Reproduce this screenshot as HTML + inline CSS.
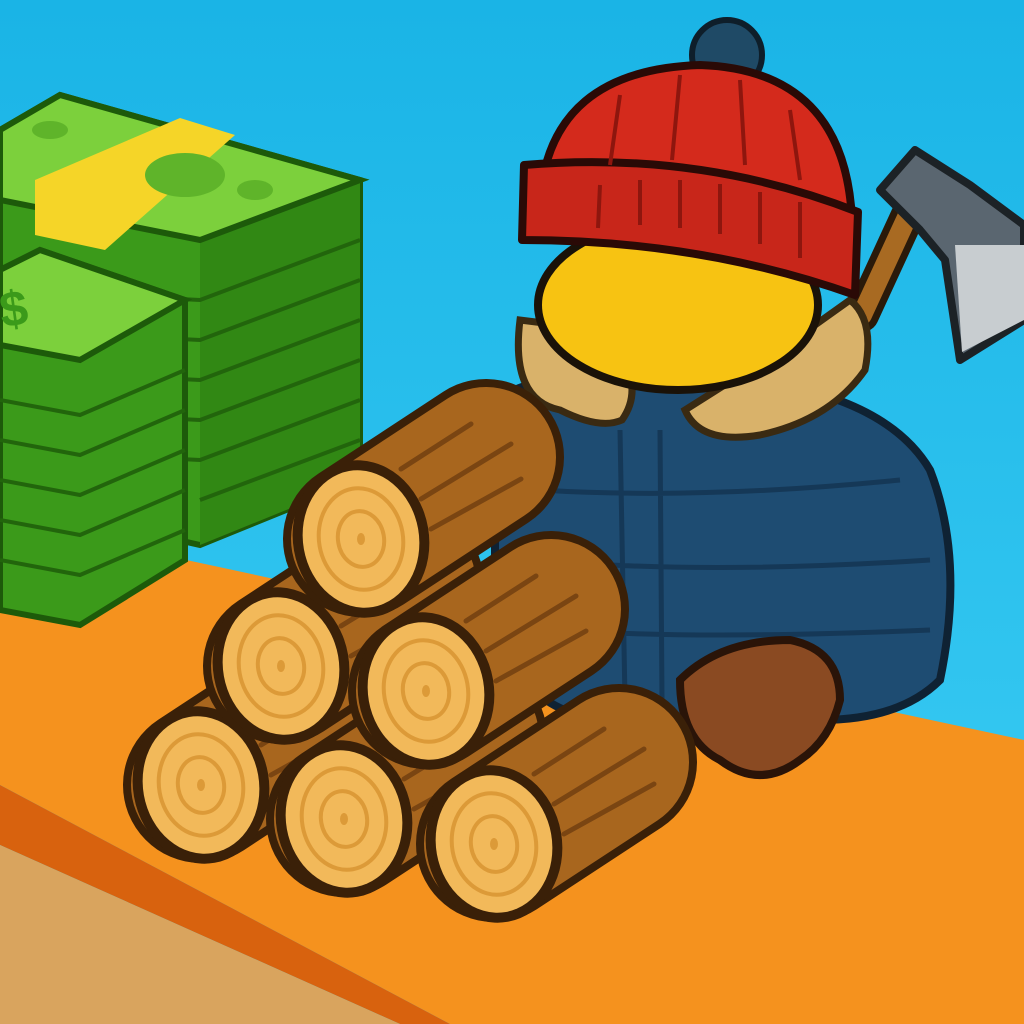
<!DOCTYPE html>
<html><head><style>html,body{margin:0;padding:0;width:1024px;height:1024px;overflow:hidden}</style></head>
<body>
<svg width="1024" height="1024" viewBox="0 0 1024 1024" xmlns="http://www.w3.org/2000/svg">
<defs>
<linearGradient id="sky" x1="0" y1="0" x2="0" y2="1"><stop offset="0" stop-color="#1ab4e6"/><stop offset="1" stop-color="#3ccdf4"/></linearGradient>
<g id="log">
  <line x1="0" y1="0" x2="125" y2="-82" stroke="#3a2008" stroke-width="156" stroke-linecap="round"/>
  <line x1="0" y1="0" x2="125" y2="-82" stroke="#a8661e" stroke-width="140" stroke-linecap="round"/>
  <path d="M60,-40 L150,-95 M70,-10 L160,-60 M40,-70 L110,-115" stroke="#7a4512" stroke-width="5" stroke-linecap="round"/>
  <ellipse cx="0" cy="0" rx="68" ry="79" fill="#3a2008" transform="rotate(-10)"/>
  <ellipse cx="0" cy="0" rx="58" ry="69" fill="#f2b95a" transform="rotate(-10)"/>
  <ellipse cx="0" cy="0" rx="42" ry="51" fill="none" stroke="#dc9a38" stroke-width="4" transform="rotate(-10)"/>
  <ellipse cx="0" cy="0" rx="23" ry="28" fill="none" stroke="#dc9a38" stroke-width="4" transform="rotate(-10)"/>
  <ellipse cx="0" cy="0" rx="4" ry="6" fill="#dc9a38"/>
</g>
</defs>
<rect width="1024" height="1024" fill="url(#sky)"/>
<!-- table -->
<polygon points="0,520 1024,740 1024,1024 450,1024 0,785" fill="#f5921e"/>
<polygon points="0,785 450,1024 400,1024 0,845" fill="#d8620e"/>
<polygon points="0,845 400,1024 0,1024" fill="#d9a45e"/>
<!-- back money stack -->
<polygon points="0,130 60,95 360,180 360,480 200,545 0,500" fill="#3b9a1a" stroke="#1d5a0a" stroke-width="6"/>
<polygon points="200,240 360,180 360,480 200,545" fill="#318814"/>
<g stroke="#22650c" stroke-width="4" fill="none">
<path d="M0,290 L200,300 L360,240 M0,330 L200,340 L360,280 M0,370 L200,380 L360,320 M0,410 L200,420 L360,360 M0,450 L200,460 L360,400 M200,500 L360,440"/>
</g>
<polygon points="0,130 60,95 360,180 200,240 0,200" fill="#7cd03c" stroke="#1d5a0a" stroke-width="6"/>
<polygon points="35,180 180,118 235,135 105,250 35,235" fill="#f5d528"/>
<ellipse cx="185" cy="175" rx="40" ry="22" fill="#5fb42a"/>
<ellipse cx="255" cy="190" rx="18" ry="10" fill="#5fb42a"/>
<ellipse cx="50" cy="130" rx="18" ry="9" fill="#5fb42a"/>
<!-- front money stack -->
<polygon points="0,270 40,250 185,300 185,560 80,625 0,610" fill="#3b9a1a" stroke="#1d5a0a" stroke-width="6"/>
<g stroke="#22650c" stroke-width="4" fill="none">
<path d="M0,400 L80,415 L185,370 M0,440 L80,455 L185,410 M0,480 L80,495 L185,450 M0,520 L80,535 L185,490 M0,560 L80,575 L185,530"/>
</g>
<polygon points="0,270 40,250 185,300 80,360 0,345" fill="#7cd03c" stroke="#1d5a0a" stroke-width="6"/>
<text x="0" y="325" font-family="Liberation Sans, sans-serif" font-weight="bold" font-size="50" fill="#3b9a1a" transform="rotate(-8 20 310)">$</text>
<!-- axe -->
<line x1="862" y1="315" x2="915" y2="200" stroke="#2a1a0a" stroke-width="34" stroke-linecap="round"/>
<line x1="862" y1="315" x2="915" y2="200" stroke="#a86a22" stroke-width="20" stroke-linecap="round"/>
<polygon points="880,190 915,150 970,185 1024,225 1024,320 960,360 945,260 920,230" fill="#5a6670" stroke="#1c2226" stroke-width="8" stroke-linejoin="round"/>
<polygon points="955,245 1024,245 1024,320 962,352" fill="#c8cdd0"/>
<!-- body -->
<path d="M495,400 Q560,360 700,375 Q880,385 930,470 Q965,560 940,680 Q900,720 820,720 L620,720 Q510,720 495,600 Z" fill="#1e4c72" stroke="#0f2233" stroke-width="8"/>
<g stroke="#153857" stroke-width="5" fill="none">
<path d="M620,430 L625,700 M660,430 L662,700 M540,490 Q700,500 900,480 M540,560 Q700,575 930,560 M560,630 Q700,640 930,630"/>
</g>
<!-- fur collar -->
<path d="M520,320 Q510,400 560,410 Q600,430 622,420 Q650,380 600,330 Z" fill="#d9b26a" stroke="#3a2a12" stroke-width="7"/>
<path d="M685,410 Q700,445 760,435 Q830,420 865,370 Q875,320 850,300 L780,350 Z" fill="#d9b26a" stroke="#3a2a12" stroke-width="7"/>
<!-- face -->
<ellipse cx="678" cy="305" rx="140" ry="85" fill="#f7c312" stroke="#1a1208" stroke-width="8"/>
<!-- hat -->
<circle cx="727" cy="55" r="35" fill="#1f4a66" stroke="#0e1e2a" stroke-width="6"/>
<path d="M540,200 Q550,70 700,65 Q845,70 852,220 Z" fill="#d42a1c" stroke="#2a0a06" stroke-width="8"/>
<path d="M524,165 Q700,150 858,212 L855,295 Q700,240 522,240 Z" fill="#c8261a" stroke="#2a0a06" stroke-width="8" stroke-linejoin="round"/>
<g stroke="#8e160e" stroke-width="4">
<path d="M600,185 L598,228 M640,180 L640,225 M680,180 L680,228 M720,184 L720,234 M760,192 L760,244 M800,202 L800,258 M620,95 L610,165 M680,75 L672,160 M740,80 L745,165 M790,110 L800,180"/>
</g>
<!-- glove -->
<path d="M680,680 Q720,640 790,640 Q840,650 840,700 Q830,740 800,760 Q760,790 720,760 Q680,740 680,680 Z" fill="#8a4a22" stroke="#2a1408" stroke-width="8"/>
<!-- logs back to front -->
<use href="#log" x="201" y="785"/>
<use href="#log" x="281" y="666"/>
<use href="#log" x="361" y="539"/>
<use href="#log" x="344" y="819"/>
<use href="#log" x="426" y="691"/>
<use href="#log" x="494" y="844"/>
</svg>
</body></html>
